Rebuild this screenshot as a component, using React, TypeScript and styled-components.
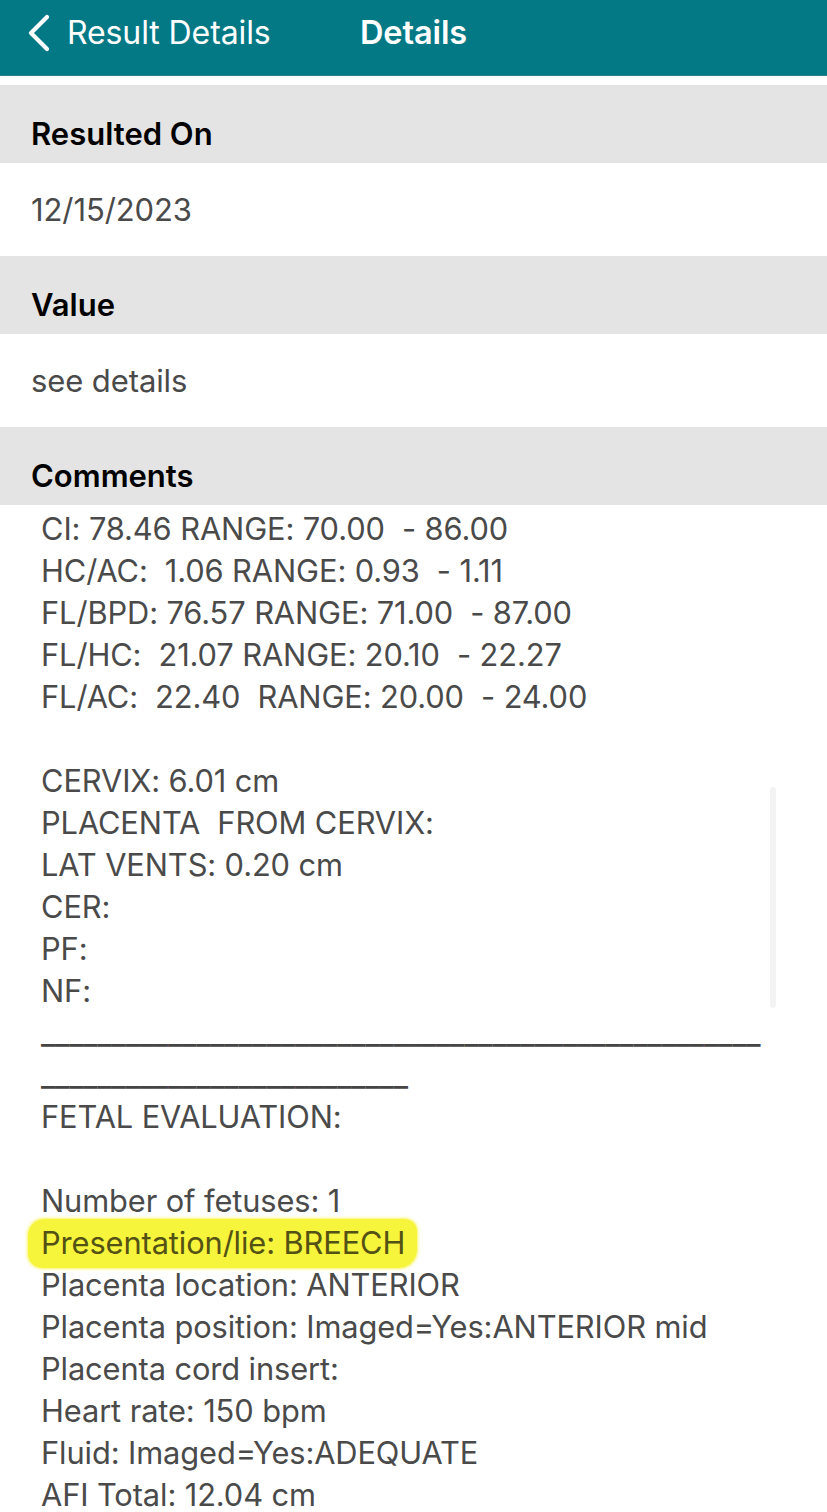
import React from "react";
import styled, { createGlobalStyle } from "styled-components";

const GlobalStyle = createGlobalStyle`
  html, body {
    margin: 0;
    padding: 0;
    background: #ffffff;
  }
  body {
    font-family: Inter, "Liberation Sans", Arial, sans-serif;
    -webkit-font-smoothing: antialiased;
  }
`;

const Screen = styled.div`
  position: relative;
  width: 827px;
  height: 1512px;
  overflow: hidden;
  background: #ffffff;
`;

const NavBar = styled.header`
  height: 76px;
  box-sizing: border-box;
  padding-bottom: 10px;
  background: #037986;
  border-bottom: 1px solid #2f7f88;
  display: grid;
  grid-template-columns: 1fr auto 1fr;
  align-items: center;
  color: #ffffff;
`;

const BackButton = styled.div`
  display: flex;
  align-items: center;
  gap: 16px;
  padding-left: 27px;
  font-size: 32px;
  font-weight: 400;
  letter-spacing: -0.1px;
`;

const NavTitle = styled.div`
  font-size: 32.5px;
  font-weight: 600;
  letter-spacing: -0.1px;
`;

const Content = styled.main`
  padding-top: 9px;
`;

const SectionHeader = styled.div`
  height: 78px;
  box-sizing: border-box;
  background: #e4e4e4;
  padding: 0 0 11px 31px;
  display: flex;
  align-items: flex-end;
  font-size: 31px;
  font-weight: 600;
  color: #000000;
`;

const SectionValue = styled.div`
  height: 93px;
  box-sizing: border-box;
  padding-left: 31px;
  display: flex;
  align-items: center;
  font-size: 31px;
  color: #4a4a4a;
  letter-spacing: -0.1px;
`;

const Comments = styled.div`
  padding: 3px 0 0 41px;
  font-size: 30.8px;
  line-height: 42px;
  color: #4a4a4a;
  letter-spacing: -0.1px;
`;

const Line = styled.div`
  white-space: pre;
  height: 42px;
`;

const RuleLine = styled.div`
  white-space: pre;
  height: 42px;
  letter-spacing: -0.15px;
  color: #454545;
  font-weight: 500;
`;

const Highlight = styled.span`
  background: #f7f43c;
  color: #535214;
  border-radius: 16px 12px 18px 14px;
  padding: 5px 12px 7px 13px;
  margin-left: -13px;
  box-shadow: 0 0 3px 1px rgba(247, 244, 60, 0.8);
`;

const ScrollThumb = styled.div`
  position: absolute;
  left: 770px;
  top: 787px;
  width: 6px;
  height: 221px;
  border-radius: 3px;
  background: #f3f3f3;
`;

const Chevron = () => (
  <svg width="24" height="38" viewBox="0 0 24 38" fill="none">
    <path
      d="M20 3 L4 19 L20 35"
      stroke="#ffffff"
      strokeWidth="4.2"
      strokeLinecap="round"
      strokeLinejoin="round"
    />
  </svg>
);

type Item =
  | { kind: "text"; text: string }
  | { kind: "mark"; text: string }
  | { kind: "rule"; count: number };

const t = (text: string): Item => ({ kind: "text", text });

const items: Item[] = [
  t("CI: 78.46 RANGE: 70.00  - 86.00"),
  t("HC/AC:  1.06 RANGE: 0.93  - 1.11"),
  t("FL/BPD: 76.57 RANGE: 71.00  - 87.00"),
  t("FL/HC:  21.07 RANGE: 20.10  - 22.27"),
  t("FL/AC:  22.40  RANGE: 20.00  - 24.00"),
  t(""),
  t("CERVIX: 6.01 cm"),
  t("PLACENTA  FROM CERVIX:"),
  t("LAT VENTS: 0.20 cm"),
  t("CER:"),
  t("PF:"),
  t("NF:"),
  { kind: "rule", count: 51 },
  { kind: "rule", count: 26 },
  t("FETAL EVALUATION:"),
  t(""),
  t("Number of fetuses: 1"),
  { kind: "mark", text: "Presentation/lie: BREECH" },
  t("Placenta location: ANTERIOR"),
  t("Placenta position: Imaged=Yes:ANTERIOR mid"),
  t("Placenta cord insert:"),
  t("Heart rate: 150 bpm"),
  t("Fluid: Imaged=Yes:ADEQUATE"),
  t("AFI Total: 12.04 cm"),
];

export default function App() {
  return (
    <Screen>
      <GlobalStyle />
      <NavBar>
        <BackButton>
          <Chevron />
          <span>Result Details</span>
        </BackButton>
        <NavTitle>Details</NavTitle>
        <div />
      </NavBar>
      <Content>
        <SectionHeader>Resulted On</SectionHeader>
        <SectionValue>12/15/2023</SectionValue>
        <SectionHeader>Value</SectionHeader>
        <SectionValue>see details</SectionValue>
        <SectionHeader>Comments</SectionHeader>
        <Comments>
          {items.map((it, i) => {
            if (it.kind === "rule")
              return <RuleLine key={i}>{"_".repeat(it.count)}</RuleLine>;
            if (it.kind === "mark")
              return (
                <Line key={i}>
                  <Highlight>{it.text}</Highlight>
                </Line>
              );
            return <Line key={i}>{it.text}</Line>;
          })}
        </Comments>
      </Content>
      <ScrollThumb />
    </Screen>
  );
}
